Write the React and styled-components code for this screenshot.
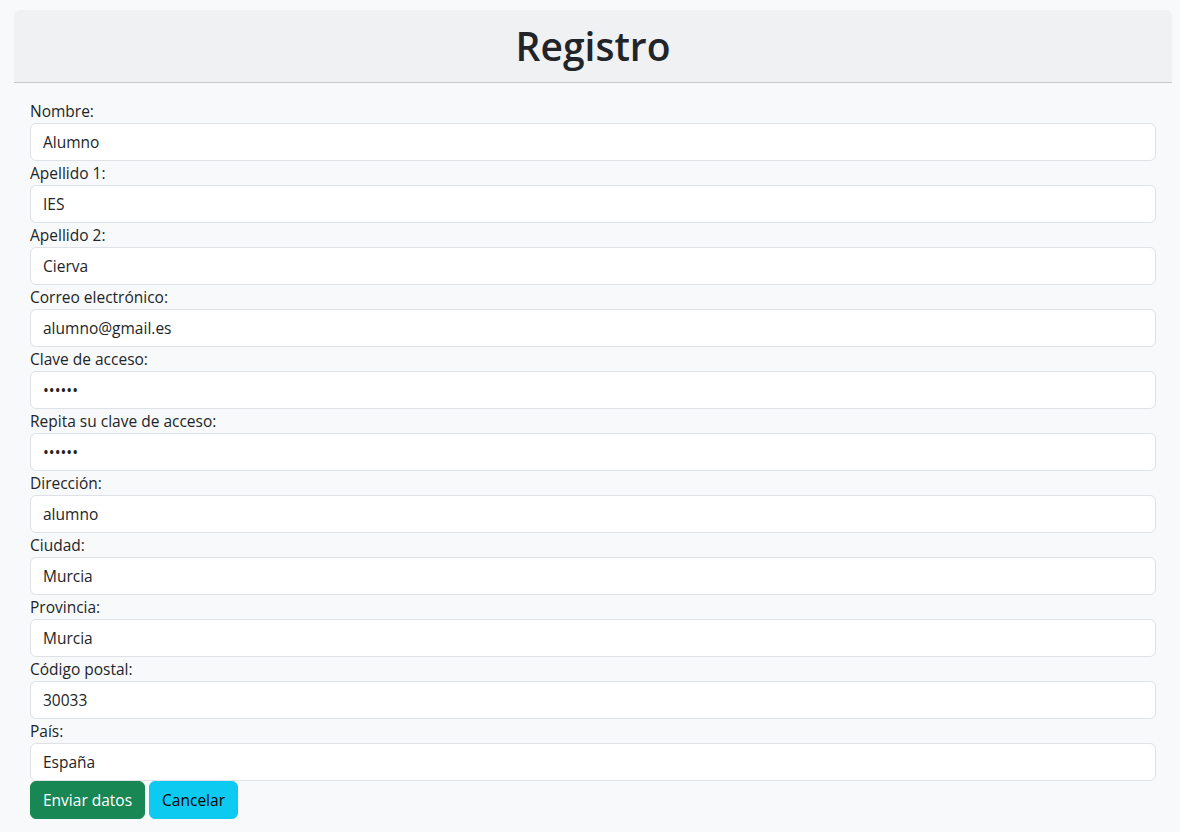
import React from 'react';
import styled, { createGlobalStyle } from 'styled-components';

const GlobalStyle = createGlobalStyle`
  * { box-sizing: border-box; }
  body {
    margin: 0;
    background: #f8f9fa;
    color: #212529;
    font-family: "Open Sans", "Noto Sans", sans-serif;
    font-size: 15.5px;
    line-height: 1.5;
  }
`;

// Styled Components
const Page = styled.div`
  padding: 10px 8px 0 14px;
`;

const Card = styled.div`
  border-radius: 6px;
  display: flex;
  flex-direction: column;
`;

const CardHeader = styled.div`
  height: 73px;
  display: flex;
  align-items: center;
  justify-content: center;
  background: rgba(0, 0, 0, 0.03);
  border-bottom: 1px solid rgba(0, 0, 0, 0.175);
  border-radius: 6px 6px 0 0;
`;

const Title = styled.h1`
  margin: 0;
  font-size: 39px;
  font-weight: 600;
  line-height: 1.2;
`;

const CardBody = styled.form`
  padding: 16px;
  display: flex;
  flex-direction: column;
`;

const Label = styled.label`
  display: block;
  line-height: 24px;
  height: 24px;
`;

const Input = styled.input`
  display: block;
  width: 100%;
  height: 38px;
  padding: 6px 12px;
  font-family: inherit;
  font-size: 15.5px;
  color: #212529;
  background: #fff;
  border: 1px solid #dee2e6;
  border-radius: 6px;
  outline: none;
`;

const Actions = styled.div`
  display: flex;
  gap: 4px;
`;

const Button = styled.button`
  height: 38px;
  padding: 6px 12px;
  font-family: inherit;
  font-size: 15.5px;
  border: 1px solid ${({ $bg }) => $bg};
  border-radius: 6px;
  background: ${({ $bg }) => $bg};
  color: ${({ $color }) => $color};
`;

const fields = [
  ['Nombre:', 'text', 'Alumno'],
  ['Apellido 1:', 'text', 'IES'],
  ['Apellido 2:', 'text', 'Cierva'],
  ['Correo electrónico:', 'email', 'alumno@gmail.es'],
  ['Clave de acceso:', 'password', 'aaaaaa'],
  ['Repita su clave de acceso:', 'password', 'aaaaaa'],
  ['Dirección:', 'text', 'alumno'],
  ['Ciudad:', 'text', 'Murcia'],
  ['Provincia:', 'text', 'Murcia'],
  ['Código postal:', 'text', '30033'],
  ['País:', 'text', 'España'],
];

const App = () => (
  <>
    <GlobalStyle />
    <Page>
      <Card>
        <CardHeader>
          <Title>Registro</Title>
        </CardHeader>
        <CardBody onSubmit={(e) => e.preventDefault()}>
          {fields.map(([label, type, value], i) => (
            <div key={label}>
              <Label htmlFor={`f${i}`}>{label}</Label>
              <Input id={`f${i}`} type={type} defaultValue={value} />
            </div>
          ))}
          <Actions>
            <Button type="submit" $bg="#198754" $color="#fff">Enviar datos</Button>
            <Button type="button" $bg="#0dcaf0" $color="#000">Cancelar</Button>
          </Actions>
        </CardBody>
      </Card>
    </Page>
  </>
);

export default App;
